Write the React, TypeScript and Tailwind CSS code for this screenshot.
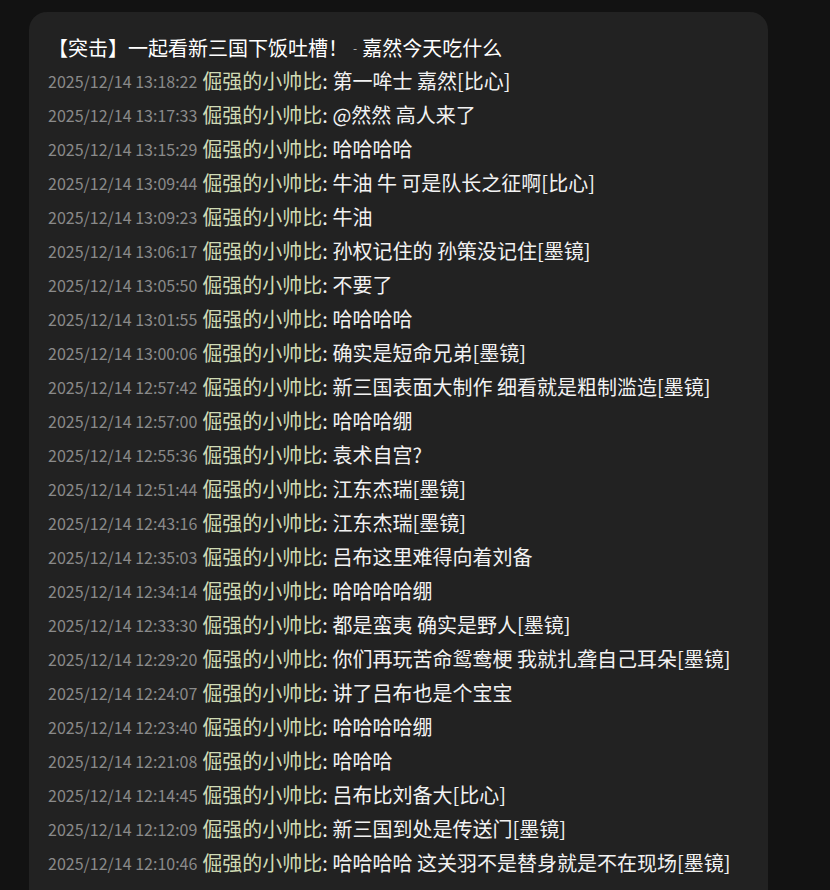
import React from "react";

const rows: [string, string][] = [
  ["2025/12/14 13:18:22", "第一哞士 嘉然[比心]"],
  ["2025/12/14 13:17:33", "@然然 高人来了"],
  ["2025/12/14 13:15:29", "哈哈哈哈"],
  ["2025/12/14 13:09:44", "牛油 牛 可是队长之征啊[比心]"],
  ["2025/12/14 13:09:23", "牛油"],
  ["2025/12/14 13:06:17", "孙权记住的 孙策没记住[墨镜]"],
  ["2025/12/14 13:05:50", "不要了"],
  ["2025/12/14 13:01:55", "哈哈哈哈"],
  ["2025/12/14 13:00:06", "确实是短命兄弟[墨镜]"],
  ["2025/12/14 12:57:42", "新三国表面大制作 细看就是粗制滥造[墨镜]"],
  ["2025/12/14 12:57:00", "哈哈哈绷"],
  ["2025/12/14 12:55:36", "袁术自宫?"],
  ["2025/12/14 12:51:44", "江东杰瑞[墨镜]"],
  ["2025/12/14 12:43:16", "江东杰瑞[墨镜]"],
  ["2025/12/14 12:35:03", "吕布这里难得向着刘备"],
  ["2025/12/14 12:34:14", "哈哈哈哈绷"],
  ["2025/12/14 12:33:30", "都是蛮夷 确实是野人[墨镜]"],
  ["2025/12/14 12:29:20", "你们再玩苦命鸳鸯梗 我就扎聋自己耳朵[墨镜]"],
  ["2025/12/14 12:24:07", "讲了吕布也是个宝宝"],
  ["2025/12/14 12:23:40", "哈哈哈哈绷"],
  ["2025/12/14 12:21:08", "哈哈哈"],
  ["2025/12/14 12:14:45", "吕布比刘备大[比心]"],
  ["2025/12/14 12:12:09", "新三国到处是传送门[墨镜]"],
  ["2025/12/14 12:10:46", "哈哈哈哈 这关羽不是替身就是不在现场[墨镜]"],
];

export default function App() {
  return (
    <div
      className="w-[830px] h-[890px] overflow-hidden bg-[#121212] pt-3 pl-[29px]"
      style={{ fontFamily: '"Noto Sans CJK SC", "Noto Sans", sans-serif' }}
    >
      <div className="w-[739px] h-[890px] rounded-t-[18px] bg-[#222222] pt-[18px] pl-[19px]">
        <div className="h-[34px] pt-[2px] flex items-center text-[20px] text-white whitespace-nowrap">
          <span>【突击】一起看新三国下饭吐槽！</span>
          <span className="text-[12px] text-[#bbbbbb] mx-[5px]">-</span>
          <span>嘉然今天吃什么</span>
        </div>
        {rows.map(([t, c], i) => (
          <div key={i} className="h-[34px] flex items-center whitespace-nowrap">
            <span className="text-[16px] text-[#8a8a8a]">{t}</span>
            <span className="text-[20px] text-[#cfdab4] ml-[5px]">倔强的小帅比</span>
            <span className="text-[20px] text-[#f2f2f2]">: {c}</span>
          </div>
        ))}
      </div>
    </div>
  );
}
